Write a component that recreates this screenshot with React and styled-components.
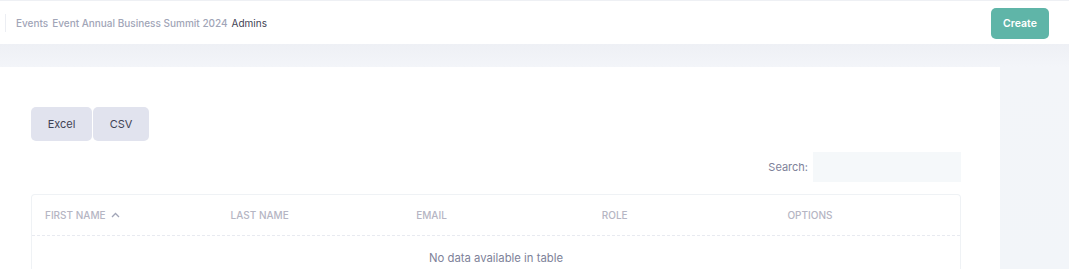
import React from "react";
import styled, { createGlobalStyle } from "styled-components";

const Global = createGlobalStyle`
  html, body { margin: 0; padding: 0; }
  body { font-family: Inter, "Noto Sans", sans-serif; background: #f2f5f9; overflow: hidden; }
  * { box-sizing: border-box; }
`;

const Page = styled.div`
  width: 1069px;
  height: 269px;
  display: flex;
  flex-direction: column;
  background: #f2f5f9;
`;

const Header = styled.header`
  height: 44px;
  flex: none;
  background: #fff;
  border-top: 1px solid #eef0f4;
  display: flex;
  align-items: center;
  justify-content: space-between;
  padding: 0 20px 0 5px;
`;

const Crumbs = styled.nav`
  display: flex;
  align-items: center;
  height: 18px;
  border-left: 1px solid #eceef3;
  padding-left: 10px;
  gap: 4px;
  font-size: 10px;
  font-weight: 500;
`;

const Crumb = styled.span`
  color: ${(p) => (p.$active ? "#3f4254" : "#a1a5b7")};
  font-weight: ${(p) => (p.$active ? 400 : 500)};
`;

const CreateButton = styled.button`
  width: 58px;
  height: 31px;
  border: none;
  border-radius: 5px;
  background: #5fb5a8;
  color: #fff;
  font-family: inherit;
  font-size: 10.5px;
  font-weight: 600;
  margin-top: 1px;
`;

const Body = styled.div`
  flex: 1;
  display: flex;
  padding-top: 23px;
  background: linear-gradient(#eef0f5 0px, #f3f5f9 23px, #f2f5f9 100%);
`;

const Card = styled.section`
  width: 1000px;
  background: #fff;
  padding: 40px 39px 0 31px;
  display: flex;
  flex-direction: column;
`;

const ExportGroup = styled.div`
  display: flex;
  gap: 1px;
`;

const ExportButton = styled.button`
  width: ${(p) => p.$w}px;
  height: 34px;
  border: none;
  border-radius: 5px;
  background: #e1e3ee;
  color: #3f4254;
  font-family: inherit;
  font-size: 11px;
  font-weight: 400;
`;

const SearchRow = styled.div`
  display: flex;
  justify-content: flex-end;
  align-items: center;
  gap: 5px;
  margin-top: 11px;
  font-size: 11px;
  color: #7e8299;
`;

const SearchInput = styled.div`
  width: 148px;
  height: 30px;
  background: #f5f8fa;
`;

const Table = styled.div`
  margin-top: 12px;
  border: 1px solid #eff2f5;
  border-bottom: none;
  border-radius: 4px 4px 0 0;
  flex: 1;
`;

const HeadRow = styled.div`
  display: grid;
  grid-template-columns: repeat(5, 1fr);
  height: 41px;
  align-items: center;
  border-bottom: 1px dashed #e8eaf0;
`;

const HeadCell = styled.div`
  padding-left: 13px;
  font-size: 10px;
  font-weight: 500;
  color: #b5b5c3;
  text-transform: uppercase;
  display: flex;
  align-items: center;
  gap: 5px;
`;

const Empty = styled.div`
  text-align: center;
  padding-top: 15px;
  font-size: 11.3px;
  color: #7e8299;
`;

const cols = ["First name", "Last name", "Email", "Role", "Options"];

export default function App() {
  return (
    <Page>
      <Global />
      <Header>
        <Crumbs>
          <Crumb>Events</Crumb>
          <Crumb>Event Annual Business Summit 2024</Crumb>
          <Crumb $active>Admins</Crumb>
        </Crumbs>
        <CreateButton>Create</CreateButton>
      </Header>
      <Body>
        <Card>
          <ExportGroup>
            <ExportButton $w={61}>Excel</ExportButton>
            <ExportButton $w={56}>CSV</ExportButton>
          </ExportGroup>
          <SearchRow>
            Search:
            <SearchInput />
          </SearchRow>
          <Table>
            <HeadRow>
              {cols.map((c, i) => (
                <HeadCell key={c}>
                  {c}
                  {i === 0 && (
                    <svg width="9" height="6" viewBox="0 0 9 6" fill="none">
                      <path d="M1 5l3.5-3.5L8 5" stroke="#a1a5b7" strokeWidth="1.3" />
                    </svg>
                  )}
                </HeadCell>
              ))}
            </HeadRow>
            <Empty>No data available in table</Empty>
          </Table>
        </Card>
      </Body>
    </Page>
  );
}
